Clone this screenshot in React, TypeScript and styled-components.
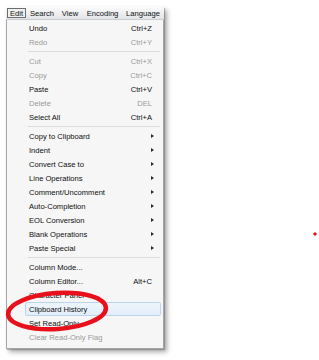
import React from "react";
import styled, { createGlobalStyle } from "styled-components";

const Global = createGlobalStyle`
  html, body { margin: 0; padding: 0; background: #ffffff; }
  body { width: 319px; height: 360px; overflow: hidden; font-family: "Liberation Sans", Arial, sans-serif; }
`;

const Page = styled.div`
  position: relative;
  width: 319px;
  height: 360px;
  padding: 7px 0 0 6px;
  box-sizing: border-box;
`;

const Window = styled.div`
  width: 158px;
  display: flex;
  flex-direction: column;
  box-shadow: 3px 3px 5px rgba(0, 0, 0, 0.35), 1px 1px 1px rgba(0, 0, 0, 0.2);
`;

const MenuBar = styled.div`
  height: 12px;
  display: flex;
  align-items: center;
  background: linear-gradient(#fbfbfb, #e2e4e8);
  border-bottom: 1px solid #c9ccd2;
  padding-left: 1px;
`;

const BarItem = styled.div<{ $active?: boolean; $w: number }>`
  width: ${(p) => p.$w}px;
  height: 10px;
  box-sizing: border-box;
  display: flex;
  align-items: center;
  justify-content: center;
  font-size: 7.6px;
  color: #111;
  border: 1px solid ${(p) => (p.$active ? "#6d6d6d" : "transparent")};
  background: ${(p) => (p.$active ? "#eef0f2" : "transparent")};
`;

const Panel = styled.div`
  background: #f6f6f6;
  border-left: 1px solid #a6a6a6;
  border-right: 1px solid #a6a6a6;
  border-bottom: 1px solid #a6a6a6;
  padding: 1px 1px 4px 1px;
  display: flex;
  flex-direction: column;
`;

const Row = styled.div<{ $disabled?: boolean; $hover?: boolean }>`
  height: 14px;
  box-sizing: border-box;
  margin: 0 1px 0 17px;
  padding: 0 4px 0 3px;
  display: flex;
  align-items: center;
  font-size: 7.6px;
  color: ${(p) => (p.$disabled ? "#9a9a9a" : "#0e0e0e")};
  border: 1px solid ${(p) => (p.$hover ? "#b9d5ef" : "transparent")};
  border-radius: 2px;
  background: ${(p) => (p.$hover ? "linear-gradient(#eef5fc, #e2eefa)" : "transparent")};
`;

const Label = styled.span`
  flex: 1;
  white-space: nowrap;
`;

const Shortcut = styled.span`
  white-space: nowrap;
  margin-right: 4px;
`;

const Arrow = styled.span`
  width: 0;
  height: 0;
  border-top: 2.5px solid transparent;
  border-bottom: 2.5px solid transparent;
  border-left: 3px solid #2a2a2a;
  margin-right: 2px;
`;

const Separator = styled.div`
  height: 5px;
  margin: 0 2px 0 20px;
  display: flex;
  align-items: center;
  &::after {
    content: "";
    flex: 1;
    border-top: 1px solid #dcdcdc;
  }
`;

const Annotation = styled.svg`
  position: absolute;
  left: 0;
  top: 0;
  pointer-events: none;
`;

type Item =
  | { sep: true }
  | { sep?: false; label: string; shortcut?: string; disabled?: boolean; sub?: boolean; hover?: boolean };

const items: Item[] = [
  { label: "Undo", shortcut: "Ctrl+Z" },
  { label: "Redo", shortcut: "Ctrl+Y", disabled: true },
  { sep: true },
  { label: "Cut", shortcut: "Ctrl+X", disabled: true },
  { label: "Copy", shortcut: "Ctrl+C", disabled: true },
  { label: "Paste", shortcut: "Ctrl+V" },
  { label: "Delete", shortcut: "DEL", disabled: true },
  { label: "Select All", shortcut: "Ctrl+A" },
  { sep: true },
  { label: "Copy to Clipboard", sub: true },
  { label: "Indent", sub: true },
  { label: "Convert Case to", sub: true },
  { label: "Line Operations", sub: true },
  { label: "Comment/Uncomment", sub: true },
  { label: "Auto-Completion", sub: true },
  { label: "EOL Conversion", sub: true },
  { label: "Blank Operations", sub: true },
  { label: "Paste Special", sub: true },
  { sep: true },
  { label: "Column Mode..." },
  { label: "Column Editor...", shortcut: "Alt+C" },
  { label: "Character Panel" },
  { label: "Clipboard History", hover: true },
  { label: "Set Read-Only" },
  { label: "Clear Read-Only Flag", disabled: true },
];

const bar = [
  { t: "Edit", w: 19, active: true },
  { t: "Search", w: 32 },
  { t: "View", w: 24 },
  { t: "Encoding", w: 41 },
  { t: "Language", w: 40 },
];

export default function App() {
  return (
    <Page>
      <Global />
      <Window>
        <MenuBar>
          {bar.map((b) => (
            <BarItem key={b.t} $w={b.w} $active={b.active}>
              {b.t}
            </BarItem>
          ))}
        </MenuBar>
        <Panel>
          {items.map((it, i) =>
            it.sep ? (
              <Separator key={i} />
            ) : (
              <Row key={i} $disabled={it.disabled} $hover={it.hover}>
                <Label>{it.label}</Label>
                {it.shortcut && <Shortcut>{it.shortcut}</Shortcut>}
                {it.sub && <Arrow />}
              </Row>
            )
          )}
        </Panel>
      </Window>
      <Annotation width="319" height="360" viewBox="0 0 319 360">
        <ellipse
          cx="57"
          cy="311"
          rx="49"
          ry="18"
          transform="rotate(-4 57 311)"
          fill="none"
          stroke="#e8101a"
          strokeWidth="4.5"
        />
        <rect x="313.5" y="232.5" width="3" height="3" transform="rotate(45 315 234)" fill="#e8101a" />
      </Annotation>
    </Page>
  );
}
